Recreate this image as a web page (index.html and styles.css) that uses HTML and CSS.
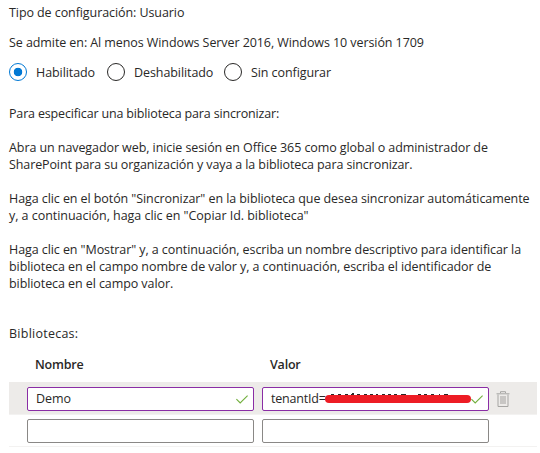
FILE: index.html
```html
<!DOCTYPE html>
<html lang="es">
<head>
<meta charset="utf-8">
<title>Configuración</title>
<link rel="stylesheet" href="styles.css">
</head>
<body>
<main class="panel">
  <p class="type">Tipo de configuración: Usuario</p>
  <p class="support">Se admite en: Al menos Windows Server 2016, Windows 10 versión 1709</p>
  <div class="options">
    <label class="option enabled"><span class="radio checked"></span><span>Habilitado</span></label>
    <label class="option disabled"><span class="radio"></span><span>Deshabilitado</span></label>
    <label class="option"><span class="radio"></span><span>Sin configurar</span></label>
  </div>
  <div class="help">
    <p class="intro">Para especificar una biblioteca para sincronizar:</p>
    <p>Abra un navegador web, inicie sesión en Office 365 como global o administrador de<br><span class="snug">SharePoint para su organización y vaya a la biblioteca para sincronizar.</span></p>
    <p>Haga clic en el botón "Sincronizar" en la biblioteca que desea sincronizar automáticamente<br><span class="loose">y, a continuación, haga clic en "Copiar Id. biblioteca"</span></p>
    <p>Haga clic en "Mostrar" y, a continuación, escriba un nombre descriptivo para identificar la<br>biblioteca en el campo nombre de valor y, a continuación, escriba el identificador de<br>biblioteca en el campo valor.</p>
  </div>
  <p class="list-label">Bibliotecas:</p>
  <section class="table">
    <div class="row head"><div>Nombre</div><div>Valor</div></div>
    <div class="row active">
      <div class="field edited"><span>Demo</span>
        <svg class="check" width="12" height="9" viewBox="0 0 12 9"><path d="M.4 4.2 4.2 8 11.6.6"/></svg>
      </div>
      <div class="field edited"><span class="tenant">tenantId=</span>
        <svg class="redaction" width="148" height="14" viewBox="0 0 148 14"><path class="traces" d="M7 3.5h3m4 0h3m4 0h3m3 0h3m-2-1h2m3 1h3m4 0h3m3 0h3m3 0h2m4 0h3m3 0h3m3 0h3m4 0h5m12 0h3m3 0h3m4 0h3m5 0h1m4 0h4"/><path class="marker" d="M5 8H143"/></svg>
        <svg class="check" width="12" height="9" viewBox="0 0 12 9"><path d="M.4 4.2 4.2 8 11.6.6"/></svg>
      </div>
      <svg class="trash" width="14" height="17" viewBox="0 0 14 17"><path class="can" d="M2 3.5V15.5H12V3.5"/><path class="lid" d="M.5 2.8H13.5M4.5 2V.7H9.5V2"/><path class="fill" d="M4 5h6v8H4z"/></svg>
    </div>
    <div class="row"><div class="field"></div><div class="field"></div></div>
  </section>
</main>
</body>
</html>
```
FILE: styles.css
```css
* { box-sizing: border-box; }
body { margin: 0; background: #fff; color: #292827; font: 12.5px/17px "Open Sans", "Noto Sans", sans-serif; letter-spacing: -.08px; white-space: nowrap; }
p { margin: 0; }
.panel { padding: 4px 3px 0 9px; }
.support { margin-top: 13px; }
.options { display: flex; align-items: center; height: 20px; margin-top: 11px; }
.option { display: flex; align-items: center; gap: 9px; }
.enabled { width: 98px; }
.disabled { width: 117px; }
.radio { width: 18px; height: 18px; border: 1px solid #292827; border-radius: 50%; flex: none; }
.checked { border-color: #0078d4; background: radial-gradient(circle, #0078d4 4px, transparent 4.6px); }
.help { display: flex; flex-direction: column; gap: 17px; margin-top: 23px; }
.intro { letter-spacing: -.16px; }
.snug { letter-spacing: -.11px; }
.loose { letter-spacing: -.04px; }
.list-label { margin-top: 33px; letter-spacing: .25px; }
.table { width: 528px; margin-top: 13px; }
.row { display: grid; grid-template-columns: 227px 227px 14px; column-gap: 8px; align-items: start; height: 32px; padding: 4px 0 0 18px; border-bottom: 1px solid #f3f2f1; }
.head { height: 27px; border: 0; font-weight: 600; padding: 1px 0 0 18px; letter-spacing: -.2px; }
.head div { padding-left: 8px; }
.active { height: 33px; padding-top: 5px; background: #edebe9; }
.field { position: relative; display: flex; align-items: center; height: 24px; padding: 0 5px 0 8px; border: 1px solid #8a8886; border-radius: 2px; background: #fff; }
.field span { margin-bottom: 2px; }
.tenant { letter-spacing: -.2px; }
.edited { border-color: #8a2da5; }
.check { margin-left: auto; fill: none; stroke: #71af3c; stroke-width: 1.1; }
.redaction { position: absolute; left: 61px; top: 3px; }
.traces { fill: none; stroke: #292827; stroke-width: 1; }
.marker { stroke: #ed1c24; stroke-width: 8; stroke-linecap: round; }
.trash { margin: 4px 0 0 -1px; fill: none; stroke: #a6a5a3; }
.trash .fill { fill: #c8c6c4; stroke: none; }
```
